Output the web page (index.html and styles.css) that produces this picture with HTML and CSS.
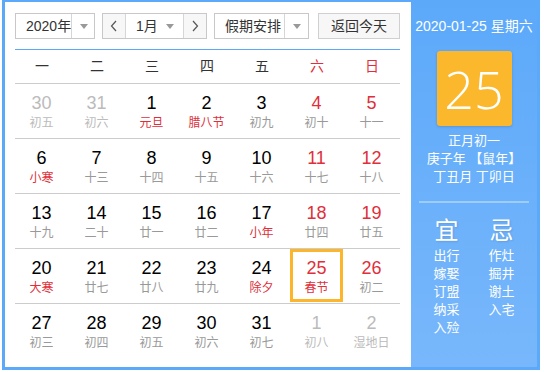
FILE: index.html
```html
<!DOCTYPE html>
<html lang="zh-CN">
<head>
<meta charset="utf-8">
<link rel="stylesheet" href="styles.css">
</head>
<body>
<div class="cal">
  <div class="main">
    <div class="toolbar">
      <div class="sel year"><span class="val">2020年</span><span class="arr"><i class="tri"></i></span></div>
      <div class="month-group">
        <span class="nav"><svg width="8" height="12" viewBox="0 0 8 12"><path d="M6 1 L1.5 6 L6 11" fill="none" stroke="#555" stroke-width="1.2"/></svg></span>
        <span class="mval"><span>1月</span><i class="tri"></i></span>
        <span class="nav"><svg width="8" height="12" viewBox="0 0 8 12"><path d="M2 1 L6.5 6 L2 11" fill="none" stroke="#555" stroke-width="1.2"/></svg></span>
      </div>
      <div class="sel hol"><span class="val">假期安排</span><span class="arr"><i class="tri"></i></span></div>
      <div class="btn">返回今天</div>
    </div>
    <div class="week">
      <span>一</span><span>二</span><span>三</span><span>四</span><span>五</span><span class="red">六</span><span class="red">日</span>
    </div>
    <div class="grid">
      <div class="row">
        <div class="cell other"><div class="day"><b>30</b><em>初五</em></div></div>
        <div class="cell other"><div class="day"><b>31</b><em>初六</em></div></div>
        <div class="cell"><div class="day"><b>1</b><em class="fest">元旦</em></div></div>
        <div class="cell"><div class="day"><b>2</b><em class="fest">腊八节</em></div></div>
        <div class="cell"><div class="day"><b>3</b><em>初九</em></div></div>
        <div class="cell wk"><div class="day"><b>4</b><em>初十</em></div></div>
        <div class="cell wk"><div class="day"><b>5</b><em>十一</em></div></div>
      </div>
      <div class="row">
        <div class="cell"><div class="day"><b>6</b><em class="fest">小寒</em></div></div>
        <div class="cell"><div class="day"><b>7</b><em>十三</em></div></div>
        <div class="cell"><div class="day"><b>8</b><em>十四</em></div></div>
        <div class="cell"><div class="day"><b>9</b><em>十五</em></div></div>
        <div class="cell"><div class="day"><b>10</b><em>十六</em></div></div>
        <div class="cell wk"><div class="day"><b>11</b><em>十七</em></div></div>
        <div class="cell wk"><div class="day"><b>12</b><em>十八</em></div></div>
      </div>
      <div class="row">
        <div class="cell"><div class="day"><b>13</b><em>十九</em></div></div>
        <div class="cell"><div class="day"><b>14</b><em>二十</em></div></div>
        <div class="cell"><div class="day"><b>15</b><em>廿一</em></div></div>
        <div class="cell"><div class="day"><b>16</b><em>廿二</em></div></div>
        <div class="cell"><div class="day"><b>17</b><em class="fest">小年</em></div></div>
        <div class="cell wk"><div class="day"><b>18</b><em>廿四</em></div></div>
        <div class="cell wk"><div class="day"><b>19</b><em>廿五</em></div></div>
      </div>
      <div class="row">
        <div class="cell"><div class="day"><b>20</b><em class="fest">大寒</em></div></div>
        <div class="cell"><div class="day"><b>21</b><em>廿七</em></div></div>
        <div class="cell"><div class="day"><b>22</b><em>廿八</em></div></div>
        <div class="cell"><div class="day"><b>23</b><em>廿九</em></div></div>
        <div class="cell"><div class="day"><b>24</b><em class="fest">除夕</em></div></div>
        <div class="cell wk today"><div class="day"><b>25</b><em class="fest">春节</em></div></div>
        <div class="cell wk"><div class="day"><b>26</b><em>初二</em></div></div>
      </div>
      <div class="row last">
        <div class="cell"><div class="day"><b>27</b><em>初三</em></div></div>
        <div class="cell"><div class="day"><b>28</b><em>初四</em></div></div>
        <div class="cell"><div class="day"><b>29</b><em>初五</em></div></div>
        <div class="cell"><div class="day"><b>30</b><em>初六</em></div></div>
        <div class="cell"><div class="day"><b>31</b><em>初七</em></div></div>
        <div class="cell other"><div class="day"><b>1</b><em>初八</em></div></div>
        <div class="cell other"><div class="day"><b>2</b><em>湿地日</em></div></div>
      </div>
    </div>
  </div>
  <div class="side">
    <div class="date">2020-01-25 星期六</div>
    <div class="big">25</div>
    <div class="lunar">
      <div>正月初一</div>
      <div>庚子年 【鼠年】</div>
      <div>丁丑月 丁卯日</div>
    </div>
    <div class="divider"></div>
    <div class="yiji">
      <div class="col">
        <div class="head">宜</div>
        <div>出行</div><div>嫁娶</div><div>订盟</div><div>纳采</div><div>入殓</div>
      </div>
      <div class="col">
        <div class="head">忌</div>
        <div>作灶</div><div>掘井</div><div>谢土</div><div>入宅</div>
      </div>
    </div>
  </div>
</div>
</body>
</html>
```

FILE: styles.css
```css
* { box-sizing: border-box; }
html, body { margin: 0; padding: 0; background: #fff; }
body {
  font-family: "Liberation Sans", "Noto Sans CJK SC", sans-serif;
  color: #333;
}
.cal {
  margin-left: 2px;
  width: 538px;
  height: 370px;
  border: 3px solid #5ca9fa;
  border-top-width: 2px;
  display: flex;
  background: #fff;
}
.main {
  width: 406px;
  padding: 11px 11px 0 10px;
}
.toolbar {
  display: flex;
  height: 26px;
  font-size: 14px;
  color: #333;
  white-space: nowrap;
}
.tri {
  display: inline-block;
  flex: none;
  width: 0; height: 0;
  border-left: 4px solid transparent;
  border-right: 4px solid transparent;
  border-top: 5px solid #999;
}
.sel {
  display: flex;
  border: 1px solid #c8c8c8;
  height: 26px;
  background: #fff;
}
.sel .val {
  flex: 1;
  line-height: 24px;
  padding-left: 10px;
}
.sel .arr {
  width: 24px;
  flex: none;
  border-left: 1px solid #d6d6d6;
  display: flex;
  align-items: center;
  justify-content: center;
}
.year { width: 80px; }
.hol { width: 95px; margin-left: 7px; }
.hol .val { padding-left: 10px; }
.month-group {
  display: flex;
  width: 105px;
  margin-left: 7px;
  border: 1px solid #c8c8c8;
  height: 26px;
}
.nav {
  width: 23px;
  flex: none;
  background: #f7f7f7;
  display: flex;
  align-items: center;
  justify-content: center;
}
.nav:first-child { border-right: 1px solid #d6d6d6; }
.nav:last-child { border-left: 1px solid #d6d6d6; }
.mval {
  flex: 1;
  line-height: 24px;
  padding: 0 9px 0 10px;
  display: flex;
  align-items: center;
  justify-content: space-between;
}
.btn {
  margin-left: 9px;
  width: 82px;
  border: 1px solid #d0d0d0;
  background: #f7f7f7;
  text-align: center;
  line-height: 24px;
  height: 26px;
}
.week {
  margin-top: 10px;
  border-top: 1px solid #5ca9fa;
  border-bottom: 1px solid #ccc;
  display: grid;
  grid-template-columns: repeat(7, 55px);
  height: 35px;
  line-height: 33px;
  font-size: 14px;
  color: #333;
}
.week span { text-align: center; padding-right: 1px; }
.week .red { color: #e02f3b; }
.row {
  display: grid;
  grid-template-columns: repeat(7, 55px);
  height: 55px;
  border-bottom: 1px solid #ccc;
}
.row.last { border-bottom: none; }
.day {
  width: 53px;
  height: 53px;
  border: 3px solid transparent;
  padding-top: 5px;
  text-align: center;
}
.day b {
  display: block;
  font-weight: normal;
  font-size: 18px;
  line-height: 22px;
  color: #000;
}
.day em {
  display: block;
  font-style: normal;
  font-size: 12px;
  line-height: 18px;
  color: #999;
}
.wk .day b { color: #e02f3b; }
.day em.fest { color: #e02f3b; }
.other .day b, .other .day em { color: #bbb; }
.today .day { border-color: #fdb52c; }
.side {
  flex: 1;
  background: linear-gradient(#5ca9fa, #78b7fb);
  color: #fff;
  display: flex;
  flex-direction: column;
  align-items: center;
  padding-top: 14px;
}
.date {
  font-size: 14px;
  line-height: 20px;
}
.big {
  margin-top: 15px;
  width: 75px;
  height: 75px;
  background: #fcb82d;
  border-radius: 3px;
  box-shadow: 0 1px 3px rgba(0,0,0,0.15);
  font-size: 52px;
  line-height: 75px;
  text-align: center;
  font-family: "Open Sans", "Liberation Sans", sans-serif;
  font-weight: 300;
}
.lunar {
  margin-top: 6px;
  font-size: 13px;
  line-height: 18px;
  text-align: center;
}
.divider {
  margin-top: 15px;
  width: 110px;
  height: 2px;
  background: rgba(255,255,255,0.35);
}
.yiji {
  margin-top: 12px;
  display: flex;
  gap: 5px;
}
.yiji .col {
  width: 50px;
  text-align: center;
  font-size: 13px;
  line-height: 18px;
}
.yiji .head {
  font-size: 24px;
  line-height: 32px;
  text-shadow: 1px 1px 2px rgba(0,0,0,0.12);
}
```
